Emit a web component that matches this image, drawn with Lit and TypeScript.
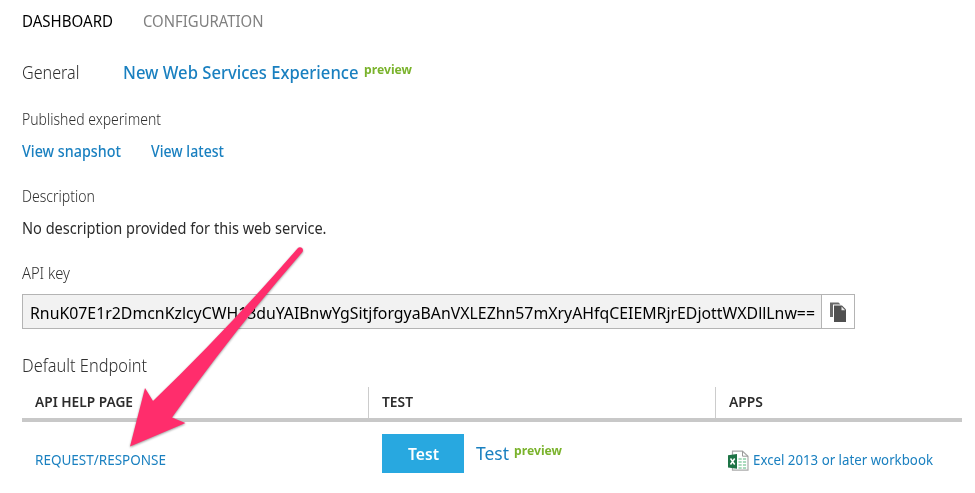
import { LitElement, html, css } from "lit";
import { customElement, property } from "lit/decorators.js";

/** Single line of text condensed or widened to an exact width. */
@customElement("fit-text")
export class FitText extends LitElement {
  @property({ type: Number }) w = 100;

  static styles = css`
    :host { display: inline-block; flex: none; white-space: nowrap; line-height: 20px; height: 20px; }
    .inner { display: inline-block; transform-origin: 0 50%; }
  `;

  firstUpdated() {
    const inner = this.renderRoot.querySelector(".inner") as HTMLElement;
    this.style.width = `${this.w}px`;
    const natural = inner.getBoundingClientRect().width;
    if (natural) inner.style.transform = `scaleX(${this.w / natural})`;
  }

  render() {
    return html`<span class="inner"><slot></slot></span>`;
  }
}

@customElement("app-root")
export class AppRoot extends LitElement {
  static styles = css`
    :host {
      display: block; position: relative; box-sizing: border-box;
      width: 975px; height: 493px; overflow: hidden; background: #fff;
      padding: 11px 13px 0 22px;
      font-family: "Noto Sans", "Open Sans", sans-serif; font-size: 15.5px; color: #2c2c2c;
    }
    .row { display: flex; height: 20px; }
    .tabs { color: #000; gap: 30px; margin-bottom: 31px; }
    .muted { color: #808080; }
    .general { font-size: 18px; gap: 43px; margin-bottom: 27px; }
    .with-tag { display: flex; gap: 5.5px; }
    .light { font-weight: 300; color: #303030; }
    .link { color: #1a80c0; }
    .general .link { font-weight: 500; }
    .tag { color: #7ab32c; font-size: 13px; font-weight: 700; margin-top: -3px; }
    .label { margin-bottom: 12px; }
    .views { gap: 30px; font-size: 15.3px; font-weight: 500; margin-bottom: 25px; }
    .desc { margin-bottom: 25px; }
    .key-label { margin-bottom: 11px; }
    .key { display: flex; box-sizing: border-box; width: 833px; height: 35px; border: 1.5px solid #b4b4b4; margin-bottom: 26px; }
    .value { flex: 1; background: #f2f2f2; padding: 7px 0 0 7px; font-size: 16px; color: #000; box-sizing: border-box; }
    .copy { width: 32px; border-left: 1px solid #b4b4b4; display: grid; place-items: center; }
    .endpoint { font-size: 18px; margin-bottom: 12px; }
    .head, .body { display: grid; grid-template-columns: 346px 347px 247px; }
    .head { height: 31px; border-bottom: 4px solid #c8c8c8; font-size: 14px; font-weight: 600; color: #2c2c2c; }
    .th { padding: 5px 0 0 13px; }
    .th + .th { border-left: 1px solid #ccc; }
    .body { padding-top: 12px; font-size: 14.4px; }
    .td { padding-left: 13px; display: flex; }
    .td:nth-child(2) { padding-left: 14px; }
    .low { padding-top: 16px; }
    .button { width: 82px; height: 39px; background: #28a8e0; color: #fff; font-family: inherit; font-size: 16.5px; font-weight: 600; display: grid; place-items: center; border: 0; padding: 0; box-sizing: border-box; margin-right: 12px; }
    .try { font-size: 18px; padding-top: 9px; gap: 5px; }
    .app { display: flex; gap: 4px; }
    .arrow { position: absolute; left: 0; top: 0; filter: drop-shadow(0 1px 1px rgba(0, 0, 0, 0.4)); }
  `;

  render() {
    return html`
      <nav class="row tabs">
        <fit-text w="91">DASHBOARD</fit-text>
        <fit-text class="muted" w="120.5">CONFIGURATION</fit-text>
      </nav>
      <div class="row general">
        <fit-text class="light" w="57.5">General</fit-text>
        <div class="with-tag">
          <fit-text class="link" w="235.5">New Web Services Experience</fit-text>
          <fit-text class="tag" w="48">preview</fit-text>
        </div>
      </div>
      <div class="row label"><fit-text class="light" w="139">Published experiment</fit-text></div>
      <div class="row views">
        <fit-text class="link" w="99">View snapshot</fit-text>
        <fit-text class="link" w="73">View latest</fit-text>
      </div>
      <div class="row label"><fit-text class="light" w="73">Description</fit-text></div>
      <div class="row desc"><fit-text w="304.5">No description provided for this web service.</fit-text></div>
      <div class="row key-label"><fit-text class="light" w="48">API key</fit-text></div>
      <div class="key">
        <div class="value"><fit-text w="785">RnuK07E1r2DmcnKzlcyCWH13duYAIBnwYgSitjforgyaBAnVXLEZhn57mXryAHfqCEIEMRjrEDjottWXDllLnw==</fit-text></div>
        <div class="copy">
          <svg width="16" height="20" viewBox="0 0 16 20">
            <path d="M0 .5h8.500l2 2H3v12.500H0z" fill="#6a6a6a"/>
            <path d="M4 3.500h8l4 4V20H4z" fill="#505050"/>
            <path d="M11.500 4.500v3.700h3.700z" fill="#e8e8e8"/>
          </svg>
        </div>
      </div>
      <div class="row endpoint"><fit-text class="light" w="125">Default Endpoint</fit-text></div>
      <div class="head">
        <div class="th"><fit-text w="98">API HELP PAGE</fit-text></div>
        <div class="th"><fit-text w="31">TEST</fit-text></div>
        <div class="th"><fit-text w="34">APPS</fit-text></div>
      </div>
      <div class="body">
        <div class="td low"><fit-text class="link" w="131">REQUEST/RESPONSE</fit-text></div>
        <div class="td">
          <button class="button"><fit-text w="31">Test</fit-text></button>
          <div class="with-tag try">
            <fit-text class="link" w="33">Test</fit-text>
            <fit-text class="tag" w="48">preview</fit-text>
          </div>
        </div>
        <div class="td low">
          <div class="app">
            <svg width="21" height="21" viewBox="0 0 21 21">
              <path d="M4.500 1.200h10l5.500 5v14H4.500z" fill="#fff" stroke="#aaa" stroke-width="1.200"/>
              <path d="M14.500 1.200v5h5.500" fill="none" stroke="#999"/>
              <path d="M10.500 9h8M10.500 12h8M10.500 15h8M10.500 18h8" stroke="#8fd0a8" stroke-width="1.500" stroke-dasharray="3.200 1.200"/>
              <path d="M0 5.200L9 4v14.800L0 17.500z" fill="#1e7446"/>
              <path d="M2.500 8.500l4.200 6M6.700 8.500l-4.200 6" stroke="#fff" stroke-width="1.500"/>
            </svg>
            <fit-text class="link" w="180">Excel 2013 or later workbook</fit-text>
          </div>
        </div>
      </div>
      <svg class="arrow" width="320" height="460" viewBox="0 0 320 460">
        <path d="M130 446.500L145 388L153 401Q226 331 297.500 248.500C300 245.500 304.500 248.500 302.500 252Q232 333 172 417.500L185.500 423Z" fill="#ff2d6c"/>
      </svg>
    `;
  }
}
